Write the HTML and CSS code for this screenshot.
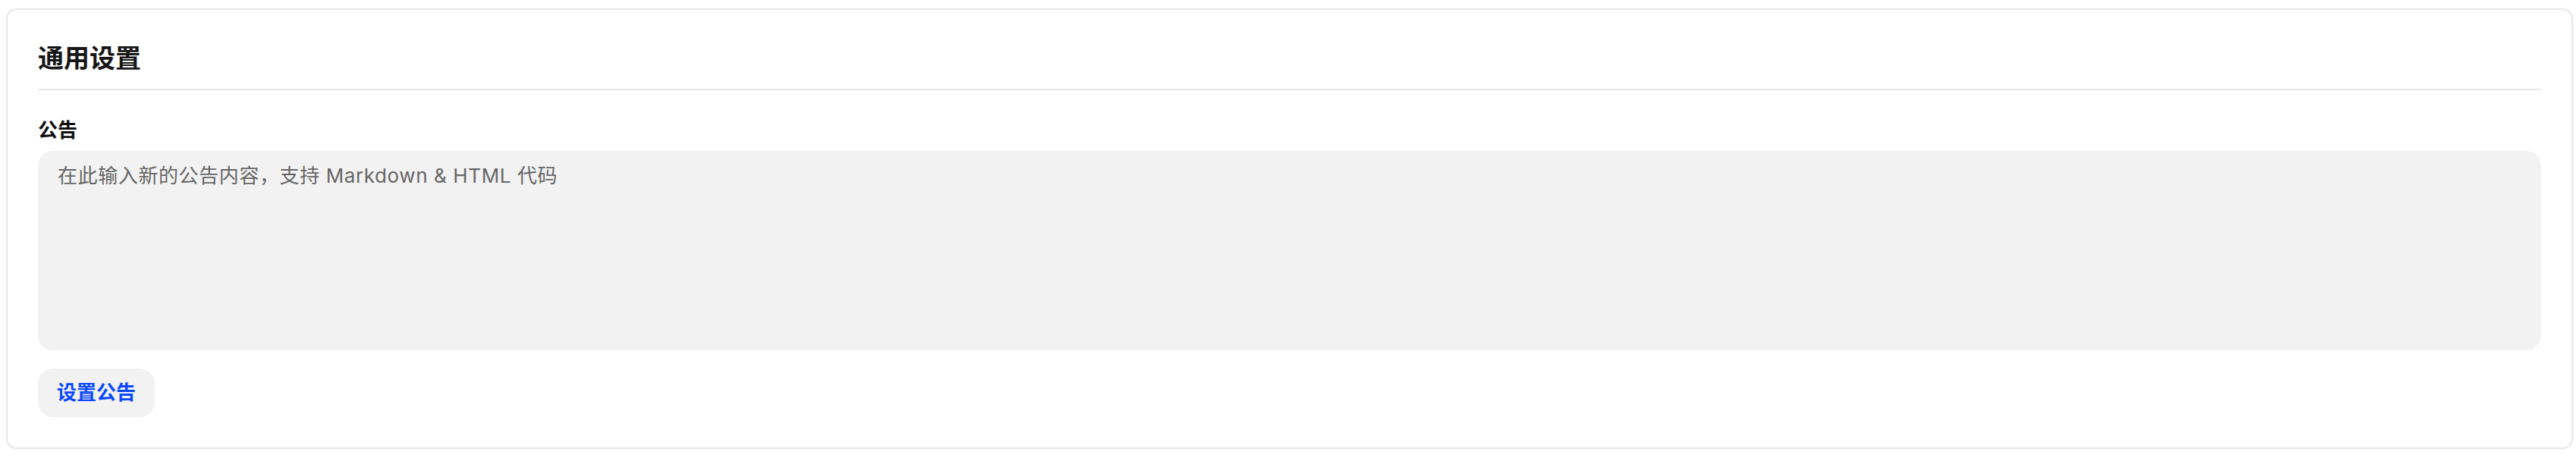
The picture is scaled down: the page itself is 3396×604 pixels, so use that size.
FILE: index.html
```html
<!DOCTYPE html>
<html lang="zh-CN">
<head>
<meta charset="utf-8">
<title>通用设置</title>
<link rel="stylesheet" href="styles.css">
</head>
<body>
<div class="page">
  <section class="card">
    <h2 class="card-title">通用设置</h2>
    <div class="field">
      <label class="field-label" for="notice">公告</label>
      <textarea id="notice" class="field-input" placeholder="在此输入新的公告内容，支持 Markdown &amp; HTML 代码"></textarea>
    </div>
    <div class="actions">
      <button class="btn" type="button">设置公告</button>
    </div>
  </section>
</div>
</body>
</html>
```

FILE: styles.css
```css
* { box-sizing: border-box; }
html, body {
  margin: 0;
  background: #ffffff;
  font-family: Inter, "Noto Sans CJK SC", "Noto Sans", sans-serif;
  color: #1a1a1a;
}
.page {
  padding: 11px 4px 11px 8px;
}
.card {
  background: #ffffff;
  border: 2px solid #e7e7e7;
  border-radius: 14px;
  padding: 40px;
  box-shadow: 0 1px 2px rgba(0, 0, 0, 0.04);
}
.card-title {
  margin: 0 0 35px 0;
  font-size: 34px;
  line-height: 47.6px;
  font-weight: 600;
  color: #161616;
  padding-bottom: 16px;
  border-bottom: 2px solid #e8e8e8;
}
.field {
  display: flex;
  flex-direction: column;
  gap: 9px;
}
.field-label {
  font-size: 26px;
  line-height: 36px;
  font-weight: 600;
  color: #111111;
}
.field-input {
  display: block;
  width: 100%;
  height: 263px;
  border: none;
  outline: none;
  resize: none;
  border-radius: 20px;
  background: #f2f2f2;
  padding: 15px 26px;
  font-family: inherit;
  font-size: 26px;
  line-height: 36px;
  letter-spacing: 0.6px;
  color: #1a1a1a;
}
.field-input::placeholder {
  color: #666666;
  opacity: 1;
}
.actions {
  margin-top: 24px;
  display: flex;
}
.btn {
  height: 64px;
  padding: 0 25px;
  border: none;
  border-radius: 20px;
  background: #f2f2f2;
  color: #0a48ff;
  font-family: inherit;
  font-size: 26px;
  font-weight: 600;
  line-height: 36px;
  cursor: pointer;
}
```
